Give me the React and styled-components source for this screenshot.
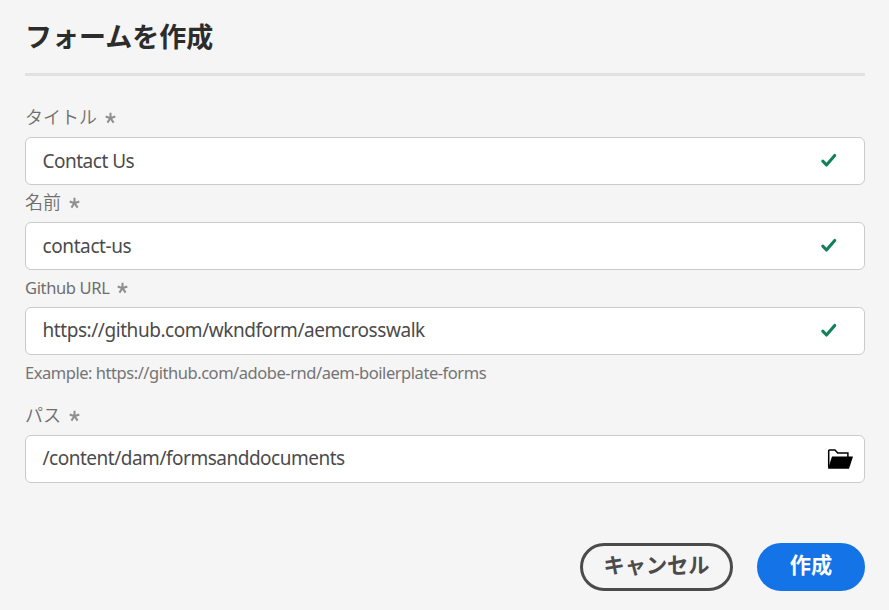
import React from "react";
import styled, { createGlobalStyle } from "styled-components";

const Global = createGlobalStyle`
  *, *::before, *::after { box-sizing: border-box; }
  body {
    margin: 0;
    background: #f5f5f5;
    font-family: "Noto Sans", "Noto Sans CJK JP", sans-serif;
  }
`;

const Dialog = styled.form`
  display: flex;
  flex-direction: column;
  width: 889px;
  height: 610px;
  padding: 0 24px 0 25px;
  overflow: hidden;
`;

const Title = styled.h1`
  margin: 0;
  height: 76px;
  padding-top: 16px;
  border-bottom: 3px solid #e1e1e1;
  font: 700 27px/40px "Noto Sans CJK JP", sans-serif;
  color: #2c2c2c;
  white-space: nowrap;
`;

const Fields = styled.div`
  display: flex;
  flex-direction: column;
  padding-top: 24px;
`;

const Label = styled.label`
  display: flex;
  align-items: flex-start;
  gap: ${(p) => (p.$latin ? 8 : 7.5)}px;
  height: 37px;
  color: #6e6e6e;
  white-space: nowrap;
`;

const LabelText = styled.span`
  font-family: ${(p) => (p.$latin ? '"Noto Sans"' : '"Noto Sans CJK JP"')}, sans-serif;
  font-size: ${(p) => (p.$latin ? 16.5 : 18)}px;
  font-weight: ${(p) => (p.$latin ? 400 : 350)};
  line-height: ${(p) => (p.$latin ? 36 : 32)}px;
  letter-spacing: ${(p) => p.$spacing || 0}px;
`;

const Box = styled.div`
  display: flex;
  align-items: center;
  justify-content: space-between;
  height: 48px;
  padding: 0 ${(p) => (p.$picker ? 11 : 27)}px 0 16.5px;
  border: 1px solid #cacaca;
  border-radius: 6px;
  background: #fff;
`;

const Value = styled.span`
  padding-bottom: ${(p) => (p.$raised ? 2 : 0)}px;
  font-size: 19px;
  line-height: 44px;
  letter-spacing: ${(p) => p.$spacing}px;
  color: #4b4b4b;
  white-space: nowrap;
`;

const Hint = styled.p`
  margin: 0;
  height: 43px;
  font-size: 16.5px;
  line-height: 36px;
  letter-spacing: ${(p) => p.$spacing}px;
  color: #747474;
  white-space: nowrap;
`;

const Actions = styled.div`
  display: flex;
  justify-content: flex-end;
  gap: 24px;
  margin-top: 60px;
`;

const Button = styled.button`
  width: ${(p) => (p.$primary ? 108 : 153)}px;
  height: 48px;
  padding: 0 0 6px;
  border: 3px solid ${(p) => (p.$primary ? "#1473e6" : "#4b4b4b")};
  border-radius: 24px;
  background: ${(p) => (p.$primary ? "#1473e6" : "transparent")};
  color: ${(p) => (p.$primary ? "#fff" : "#4b4b4b")};
  font: 700 21.2px/36px "Noto Sans CJK JP", sans-serif;
  white-space: nowrap;
`;

const Icon = styled.svg`
  display: block;
  flex: none;
`;

const RequiredMark = styled(Icon)`
  margin-top: 12px;
`;

const Asterisk = () => (
  <RequiredMark width="11" height="12" viewBox="0 0 11 12" fill="none" stroke="#8e8e8e" strokeWidth="2">
    <path d="M5.5 6.2V0.8M5.5 6.2L0.7 4.5M5.5 6.2L10.3 4.5M5.5 6.2L2.4 10.6M5.5 6.2L8.6 10.6" />
  </RequiredMark>
);

const Check = () => (
  <Icon width="17" height="16" viewBox="0 0 17 16" fill="none">
    <path d="M2.8 8.2L6.5 12L14.7 2.5" stroke="#12805c" strokeWidth="3.1" strokeLinecap="round" strokeLinejoin="round" />
  </Icon>
);

const Folder = () => (
  <Icon width="26" height="20" viewBox="0 0 26 20">
    <path d="M1.7 18.5V1.7Q1.7 1 2.4 1H8L10.7 4H20.9V8" fill="none" stroke="#000" strokeWidth="1.5" />
    <path d="M5 7.5H26L22 19.7H1Z" fill="#000" />
  </Icon>
);

const fields = [
  { label: "タイトル", value: "Contact Us", spacing: -0.5 },
  { label: "名前", value: "contact-us", spacing: -0.4 },
  {
    label: "Github URL",
    latin: true,
    labelSpacing: -0.36,
    value: "https://github.com/wkndform/aemcrosswalk",
    spacing: -0.44,
    raised: true,
    hint: "Example: https://github.com/adobe-rnd/aem-boilerplate-forms",
  },
  { label: "パス", value: "/content/dam/formsanddocuments", spacing: -0.49, raised: true, picker: true },
];

const Field = ({ label, latin, labelSpacing, value, spacing, raised, hint, picker }) => (
  <div>
    <Label $latin={latin}>
      <LabelText $latin={latin} $spacing={labelSpacing}>{label}</LabelText>
      <Asterisk />
    </Label>
    <Box $picker={picker}>
      <Value $spacing={spacing} $raised={raised}>{value}</Value>
      {picker ? <Folder /> : <Check />}
    </Box>
    {hint && <Hint $spacing={-0.46}>{hint}</Hint>}
  </div>
);

export default function App() {
  return (
    <>
      <Global />
      <Dialog>
        <Title>フォームを作成</Title>
        <Fields>
          {fields.map((f) => (
            <Field key={f.label} {...f} />
          ))}
        </Fields>
        <Actions>
          <Button type="button">キャンセル</Button>
          <Button type="button" $primary>作成</Button>
        </Actions>
      </Dialog>
    </>
  );
}
